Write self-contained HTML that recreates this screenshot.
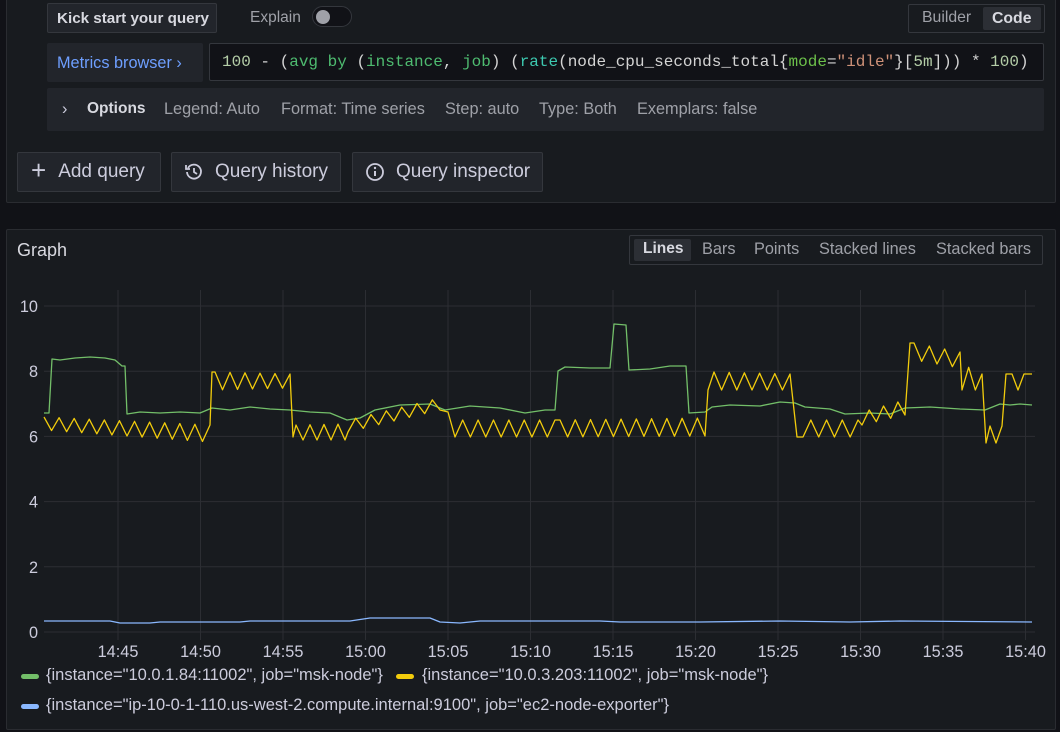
<!DOCTYPE html>
<html><head><meta charset="utf-8"><style>
*{box-sizing:border-box;margin:0;padding:0}
body{width:1060px;height:732px;background:#111217;font-family:"Liberation Sans",sans-serif;color:#ccccdc;position:relative;overflow:hidden}
.abs{position:absolute;white-space:nowrap}
.panel{background:#181b1f;border:1px solid #2a2c31;border-radius:2px}
.btn{background:#22252b;border:1px solid #34373d;border-radius:2px;color:#ccccdc;display:flex;align-items:center}
.opt{font-size:16.3px;color:#9fa1a8}
.mono{font-family:"Liberation Mono",monospace;font-size:16px}
</style></head><body>
<div class="abs panel" style="left:6px;top:-4px;width:1050px;height:207px"></div>
<div class="abs btn" style="left:47px;top:3px;width:170px;height:30px;padding-left:9px;font-size:15.2px;font-weight:bold;color:#d8d9e0">Kick start your query</div>
<div class="abs opt" style="left:250px;top:9px;font-size:15.5px">Explain</div>
<div class="abs" style="left:312px;top:6px;width:40px;height:21px;border-radius:11px;background:#111217;border:1px solid #34373d"><div style="position:absolute;left:3px;top:3px;width:14px;height:14px;border-radius:7px;background:#9fa1a8"></div></div>
<div class="abs" style="left:908px;top:4px;width:137px;height:29px;border:1px solid #34373d;border-radius:2px"></div>
<div class="abs opt" style="left:922px;top:9px;font-size:15.8px">Builder</div>
<div class="abs" style="left:983px;top:7px;width:58px;height:23px;background:#2c2f35;border-radius:2px;font-size:15.8px;font-weight:bold;color:#d8d9e0;padding:3px 0 0 9px">Code</div>
<div class="abs" style="left:47px;top:43px;width:156px;height:39px;background:#22252b;border-radius:2px;color:#6e9fff;font-size:16.3px;padding:11px 0 0 10px">Metrics browser ›</div>
<div class="abs mono" style="left:209px;top:43px;width:835px;height:38px;background:#111217;border:1px solid #34373d;border-radius:2px;padding:9px 0 0 12px;color:#d4d4d4;white-space:pre"><span style="color:#b5cea8">100</span> - (<span style="color:#4ebb70">avg</span> <span style="color:#4ebb70">by</span> (<span style="color:#4ebb70">instance</span>, <span style="color:#4ebb70">job</span>) (<span style="color:#3dc9b0">rate</span>(node_cpu_seconds_total{<span style="color:#6cc04a">mode</span>=<span style="color:#ce9178">"idle"</span>}[<span style="color:#b5cea8">5m</span>])) * <span style="color:#b5cea8">100</span>)</div>
<div class="abs" style="left:47px;top:88px;width:997px;height:43px;background:#22252b;border-radius:2px"></div>
<div class="abs opt" style="left:62px;top:100px;color:#ccccdc">›</div>
<div class="abs opt" style="left:87px;top:100px;color:#d8d9e0;font-weight:bold;font-size:15.5px">Options</div>
<div class="abs opt" style="left:164px;top:100px">Legend: Auto</div>
<div class="abs opt" style="left:281px;top:100px">Format: Time series</div>
<div class="abs opt" style="left:445px;top:100px">Step: auto</div>
<div class="abs opt" style="left:539px;top:100px">Type: Both</div>
<div class="abs opt" style="left:637px;top:100px">Exemplars: false</div>
<div class="abs btn" style="left:17px;top:152px;width:144px;height:40px;font-size:19px;padding-left:13px"><span style="font-size:26px;font-weight:300;margin-right:12px;margin-top:-3px">+</span>Add query</div>
<div class="abs btn" style="left:171px;top:152px;width:170px;height:40px;font-size:19px;padding-left:12px"><svg width="20" height="20" viewBox="0 0 20 20" style="margin-right:11px"><path d="M4 6A7 7 0 1 1 3 10" fill="none" stroke="#ccccdc" stroke-width="1.8"/><path d="M2 3v4h4" fill="none" stroke="#ccccdc" stroke-width="1.8"/><path d="M10 6v4l3 2" fill="none" stroke="#ccccdc" stroke-width="1.8"/></svg>Query history</div>
<div class="abs btn" style="left:352px;top:152px;width:191px;height:40px;font-size:19px;padding-left:12px"><svg width="20" height="20" viewBox="0 0 20 20" style="margin-right:11px"><circle cx="10" cy="10" r="8" fill="none" stroke="#ccccdc" stroke-width="1.8"/><path d="M10 9v5" stroke="#ccccdc" stroke-width="2"/><circle cx="10" cy="6" r="1.2" fill="#ccccdc"/></svg>Query inspector</div>

<div class="abs panel" style="left:6px;top:229px;width:1050px;height:501px"></div>
<div class="abs" style="left:17px;top:240px;font-size:18px;color:#d8d9e0">Graph</div>
<div class="abs" style="left:629px;top:235px;width:414px;height:30px;border:1px solid #34373d;border-radius:2px"></div>
<div class="abs" style="left:634px;top:239px;width:57px;height:22px;background:#2c2f35;border-radius:2px"></div>
<div class="abs opt" style="left:643px;top:240px;color:#d8d9e0;font-weight:bold;font-size:15.5px">Lines</div>
<div class="abs opt" style="left:702px;top:240px">Bars</div>
<div class="abs opt" style="left:754px;top:240px">Points</div>
<div class="abs opt" style="left:819px;top:240px">Stacked lines</div>
<div class="abs opt" style="left:936px;top:240px">Stacked bars</div>

<svg class="abs" style="left:0;top:0" width="1060" height="732" id="ch">
<g stroke="#2c2e33" stroke-width="1" id="grid"></g>
<g font-family="Liberation Sans" font-size="16.3" fill="#ccccdc" id="lab"></g>
</svg>
<div class="abs" style="left:21px;top:674px;width:18px;height:5px;border-radius:3px;background:#73bf69"></div>
<div class="abs opt" style="left:46px;top:666px;color:#ccccdc;font-size:16.5px">{instance="10.0.1.84:11002", job="msk-node"}</div>
<div class="abs" style="left:396px;top:674px;width:18px;height:5px;border-radius:3px;background:#f2cc0c"></div>
<div class="abs opt" style="left:422px;top:666px;color:#ccccdc;font-size:16.5px">{instance="10.0.3.203:11002", job="msk-node"}</div>
<div class="abs" style="left:21px;top:704px;width:18px;height:5px;border-radius:3px;background:#8ab8ff"></div>
<div class="abs opt" style="left:46px;top:696px;color:#ccccdc;font-size:16.5px">{instance="ip-10-0-1-110.us-west-2.compute.internal:9100", job="ec2-node-exporter"}</div>
<script>
var NS="http://www.w3.org/2000/svg",svg=document.getElementById('ch'),g=document.getElementById('grid'),lab=document.getElementById('lab');
function el(p,t,a){var e=document.createElementNS(NS,t);for(var k in a)e.setAttribute(k,a[k]);p.appendChild(e);return e}
var ys=[0,2,4,6,8,10];
ys.forEach(function(v){var y=632-v*32.6;el(g,'line',{x1:44,x2:1035,y1:y,y2:y});var t=el(lab,'text',{x:38,y:y+6,'text-anchor':'end'});t.textContent=v;});
var tl=['14:45','14:50','14:55','15:00','15:05','15:10','15:15','15:20','15:25','15:30','15:35','15:40'];
tl.forEach(function(s,i){var x=118+i*82.5;el(g,'line',{x1:x,x2:x,y1:290,y2:640});var t=el(lab,'text',{x:x,y:657,'text-anchor':'middle'});t.textContent=s;});
function osc(pts,x0,x1,h0,l0,h1,l1,start){var n=Math.round((x1-x0)/7.5);for(var i=0;i<=n;i++){var x=x0+(x1-x0)*i/n,f=i/n;var up=((i+start)%2==0);pts.push([x,up?h0+(h1-h0)*f:l0+(l1-l0)*f]);}}
var Y=[];
osc(Y,44,210,417,430,425,442,0);
Y.push([212,372]);
osc(Y,215,290,372,390,374,388,0);
Y.push([293,437]);
osc(Y,296,345,425,440,424,440,0);
osc(Y,348,440,420,432,398,410,1);
Y.push([448,412]);
osc(Y,455,555,420,437,420,437,1);
osc(Y,560,705,420,437,418,436,0);
Y.push([708,390]);
osc(Y,714,790,372,390,374,390,0);
Y.push([797,437]);
osc(Y,803,858,420,437,420,437,1);
osc(Y,862,905,412,425,400,415,1);
Y.push([910,343]);
osc(Y,914,960,343,360,352,368,0);
osc(Y,962,982,364,390,374,390,1);
Y.push([986,443]);
osc(Y,990,1002,426,443,426,443,0);
Y.push([1006,374],[1012,374],[1018,390],[1024,374],[1032,374]);
var G=[[44,413],[49,413],[52,359],[60,360],[75,358],[90,357],[105,358],[115,360],[122,366],[125,366],[127,414],[140,412],[160,413],[180,412],[200,413],[212,408],[230,410],[250,407],[270,409],[290,410],[310,412],[330,413],[347,420],[360,418],[375,410],[400,405],[430,404],[445,410],[470,406],[500,408],[525,413],[545,410],[555,410],[558,371],[565,367],[590,368],[610,368],[614,324],[626,325],[629,370],[650,369],[670,366],[686,366],[689,413],[705,412],[712,407],[730,405],[760,406],[780,402],[795,403],[805,407],[830,409],[845,414],[870,413],[890,414],[905,408],[930,407],[960,409],[985,410],[1000,404],[1010,405],[1020,404],[1032,405]];
var B=[[44,621],[110,621],[120,623],[150,623],[160,622],[240,622],[250,621],[350,621],[370,618],[430,618],[440,622],[460,623],[480,621],[560,621],[600,621],[620,622],[700,622],[780,621],[850,622],[900,621],[1032,622]];
function line(p,c){el(svg,'polyline',{points:p.map(function(q){return q[0]+','+q[1]}).join(' '),fill:'none',stroke:c,'stroke-width':1.3,'stroke-linejoin':'round'})}
line(B,'#8ab8ff');line(G,'#73bf69');line(Y,'#f2cc0c');
</script>
</body></html>
